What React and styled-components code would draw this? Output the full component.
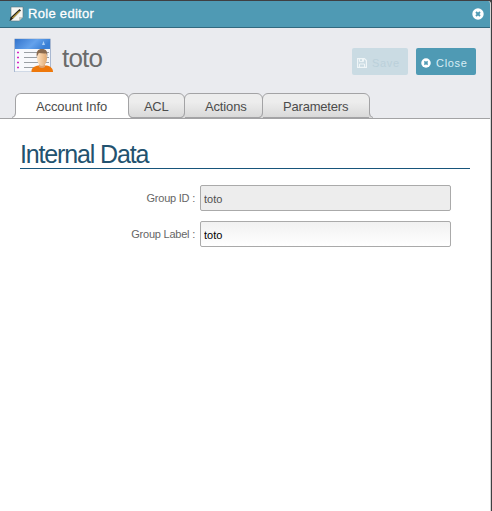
import React from "react";
import styled, { createGlobalStyle } from "styled-components";

const GlobalStyle = createGlobalStyle`
  * { box-sizing: border-box; }
  body { margin: 0; background: #3f3f42; font-family: "Liberation Sans", Arial, sans-serif; }
`;

const Dialog = styled.div`
  width: 491px;
  height: 510px;
  margin-top: 1px;
  background: #fff;
  border-top-right-radius: 3px;
  border-right: 1px solid #d6d6d6;
  overflow: hidden;
`;

const Page = styled.div`
  display: flow-root;
  height: 511px;
  overflow: hidden;
`;

const TitleBar = styled.div`
  display: flex;
  align-items: center;
  height: 27px;
  margin-right: -1px;
  padding: 0 7px 0 9px;
  background: #4f9ab4;
  border-bottom: 1px solid #32697f;
  color: #fff;
`;

const Title = styled.span`
  flex: 1;
  margin-left: 4px;
  font-size: 13px;
  line-height: 16px;
  letter-spacing: 0.3px;
  -webkit-text-stroke: 0.3px #fff;
`;

const Header = styled.header`
  display: flex;
  flex-direction: column;
  height: 91px;
  background: #eaebef;
  border-bottom: 1px solid #a3a3a5;
`;

const Heading = styled.div`
  display: flex;
  align-items: flex-start;
  height: 66px;
  padding: 10px 14px 0 14px;
`;

const RoleName = styled.h1`
  flex: 1;
  margin: 5px 0 0 7px;
  font-size: 26px;
  line-height: 30px;
  font-weight: 400;
  letter-spacing: -0.8px;
  color: #6b6b6b;
`;

const Button = styled.button`
  display: flex;
  align-items: center;
  width: ${(p) => p.$width}px;
  height: 27px;
  margin: 10px 0 0 8px;
  padding: 3px 0 0 5px;
  gap: 5px;
  border: 0;
  border-radius: 2px;
  background: ${(p) => (p.disabled ? "#cadbe3" : "#4f9ab4")};
  color: ${(p) => (p.disabled ? "#bbd0da" : "#d8edf4")};
  font: 11px/14px "Liberation Sans", Arial, sans-serif;
  letter-spacing: 0.7px;
`;

const Tabs = styled.nav`
  display: flex;
  height: 25px;
  padding-left: 15px;
`;

const TabBox = styled.div`
  position: relative;
  z-index: ${(p) => (p.$active ? 2 : 1)};
  width: ${(p) => p.$width}px;
  height: 25px;
  margin-right: -1px;
  padding: 5px 0 0 ${(p) => p.$inset}px;
  border: 1px solid #a3a3a5;
  border-bottom-color: ${(p) => (p.$active ? "#fff" : "#a3a3a5")};
  border-radius: 6px 6px 0 0;
  background: ${(p) => (p.$active ? "#fff" : "linear-gradient(#ededed 35%, #d9d9d9)")};
  font-size: 13px;
  line-height: 16px;
  letter-spacing: ${(p) => p.$spacing}px;
  white-space: nowrap;
  color: #4c4c4c;
`;

const FootShape = styled.svg`
  position: absolute;
  bottom: -1px;
  ${(p) => (p.$side === "left" ? "left: -4px;" : "right: -4px; transform: scaleX(-1);")}
`;

const Foot = ({ side, active }) => (
  <FootShape $side={side} width="4" height="5" viewBox="0 0 4 5">
    <path d="M0 5Q3.500 4.500 3.500 0H4V5z" fill={active ? "#fff" : "#d9d9d9"} />
    <path d="M0 4.500Q3.500 4 3.500 0" fill="none" stroke="#a3a3a5" />
  </FootShape>
);

const Tab = ({ active, width, inset = 20, spacing, children }) => (
  <TabBox $active={active} $width={width} $inset={inset} $spacing={spacing}>
    {children}
    <Foot side="left" active={active} />
    <Foot side="right" active={active} />
  </TabBox>
);

const Panel = styled.main`
  padding: 20px 20px 0 20px;
`;

const SectionTitle = styled.h2`
  height: 30px;
  margin: 0 0 16px;
  border-bottom: 1px solid #17557b;
  font-size: 25px;
  line-height: 30px;
  font-weight: 400;
  letter-spacing: -1.15px;
  color: #22526f;
`;

const Field = styled.label`
  display: grid;
  grid-template-columns: 175px 251px;
  column-gap: 5px;
  align-items: center;
  height: 26px;
  margin-bottom: 10px;
`;

const FieldLabel = styled.span`
  font-size: 11px;
  line-height: 14px;
  letter-spacing: -0.22px;
  text-align: right;
  color: #666;
`;

const Input = styled.input`
  width: 251px;
  height: 26px;
  padding: 1px 3px 0;
  border: 1px solid #aaa;
  border-radius: 2px;
  outline: 0;
  background: ${(p) => (p.readOnly ? "#ededed" : "linear-gradient(#f1f1f1, #fff)")};
  color: ${(p) => (p.readOnly ? "#505050" : "#000")};
  font: 11px/14px "Liberation Sans", Arial, sans-serif;
`;

const NoteIcon = () => (
  <svg width="15" height="16" viewBox="0 0 15 16">
    <path d="M2 1h12v10l-4 4H2z" fill="#f6f6f2" stroke="#5c747c" strokeWidth=".6" />
    <path d="M14 11h-4v4z" fill="#c7c9c4" />
    <path d="M.5 15l1-3.500L10.500 3l1.500 1.500-8.300 8.500z" fill="#25231a" />
    <path d="M3 11.700l7.300-7 .8.800-7.300 7z" fill="#c9a843" />
  </svg>
);

const RoleIcon = () => (
  <svg width="41" height="34" viewBox="0 0 41 34">
    <defs>
      <linearGradient id="banner" x2="1" y2=".3">
        <stop stopColor="#3474cc" />
        <stop offset=".6" stopColor="#64a2ec" />
        <stop offset="1" stopColor="#397fd5" />
      </linearGradient>
      <linearGradient id="skin" x2="1">
        <stop stopColor="#ffe3c2" />
        <stop offset="1" stopColor="#e0a970" />
      </linearGradient>
    </defs>
    <path d="M.5 1h36v33H.5z" fill="#f8f9fb" stroke="#a9b8d1" />
    <path d="M1 1h35v10H1z" fill="url(#banner)" />
    <path d="M28 7l1.500-4L31 7z" fill="#a9cff7" />
    <path d="M10 14.500h25M10 19.500h25M10 24.500h25M10 29.500h18" stroke="#9a9fa3" />
    <path d="M3 14.500h2M3 19.500h2M3 24.500h2M3 29.500h2" stroke="#d726c6" strokeWidth="1.500" />
    <path d="M17.500 34c-.5-4 3-6 7-6.500h8c4 .5 6.500 3 6.500 6.500z" fill="#ee780b" />
    <path d="M25 25h6v4q-3 2-6 0z" fill="#dda270" />
    <ellipse cx="28" cy="20.500" rx="5" ry="7.500" fill="url(#skin)" />
    <path d="M22.800 19c-.8-5.500 1-8 5.200-8s6 2.500 5.200 8l-1-3.500c-3 .3-5.500-.3-7.400-.5z" fill="#8b6b4e" />
  </svg>
);

const CloseIcon = ({ size }) => (
  <svg width={size} height={size} viewBox="0 0 12 12">
    <circle cx="6" cy="6" r="5.700" fill="#fff" />
    <path d="M4 4l4 4M8 4l-4 4" stroke="#4f9ab4" strokeWidth="1.900" />
  </svg>
);

const SaveIcon = () => (
  <svg width="10" height="10" viewBox="0 0 10 10" fill="none" stroke="#eff5f7">
    <path d="M.6.6h6.800l2 2v6.800H.6z" strokeWidth="1.200" />
    <path d="M2.500.6v3h4v-3M2.500 9V6h5v3" />
    <path d="M5.500 1v2" />
  </svg>
);

export default function App() {
  return (
    <Page>
      <GlobalStyle />
      <Dialog>
        <TitleBar>
          <NoteIcon />
          <Title>Role editor</Title>
          <CloseIcon size={12} />
        </TitleBar>
        <Header>
          <Heading>
            <RoleIcon />
            <RoleName>toto</RoleName>
            <Button disabled $width={56}>
              <SaveIcon />
              Save
            </Button>
            <Button $width={60}>
              <CloseIcon size={10} />
              Close
            </Button>
          </Heading>
          <Tabs>
            <Tab active width={114} spacing={-0.1}>Account Info</Tab>
            <Tab width={57} inset={15} spacing={-0.3}>ACL</Tab>
            <Tab width={79} spacing={-0.15}>Actions</Tab>
            <Tab width={108} spacing={-0.2}>Parameters</Tab>
          </Tabs>
        </Header>
        <Panel>
          <SectionTitle>Internal Data</SectionTitle>
          <Field>
            <FieldLabel>Group ID :</FieldLabel>
            <Input readOnly value="toto" />
          </Field>
          <Field>
            <FieldLabel>Group Label :</FieldLabel>
            <Input defaultValue="toto" />
          </Field>
        </Panel>
      </Dialog>
    </Page>
  );
}
